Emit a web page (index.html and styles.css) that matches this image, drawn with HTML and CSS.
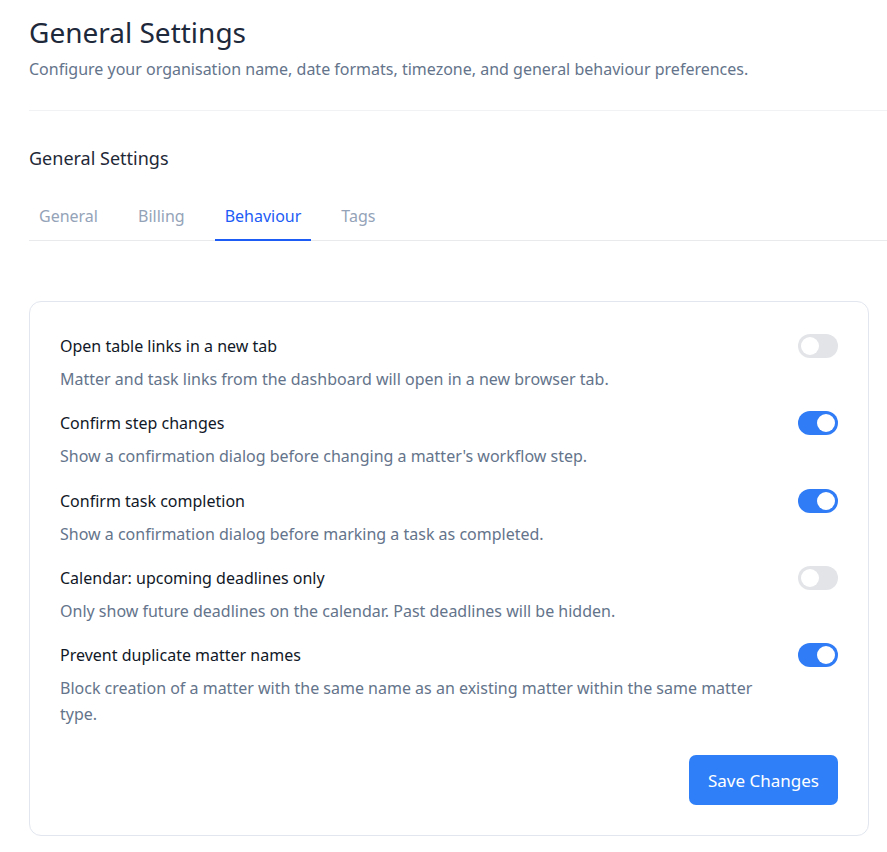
FILE: index.html
```html
<!DOCTYPE html>
<html>
<head>
<meta charset="UTF-8">
<title>General Settings</title>
<link rel="stylesheet" href="styles.css">
</head>
<body>
<div id="page">
    <header id="page-header">
        <h1>General Settings</h1>
        <p class="subtitle">Configure your organisation name, date formats, timezone, and general behaviour preferences.</p>
    </header>

    <section id="settings">
        <h2>General Settings</h2>

        <nav class="tabs">
            <a class="tab">General</a>
            <a class="tab">Billing</a>
            <a class="tab active">Behaviour</a>
            <a class="tab">Tags</a>
        </nav>

        <div class="card">
            <div class="option">
                <div class="option-text">
                    <div class="option-label">Open table links in a new tab</div>
                    <div class="option-desc">Matter and task links from the dashboard will open in a new browser tab.</div>
                </div>
                <span class="toggle"></span>
            </div>
            <div class="option">
                <div class="option-text">
                    <div class="option-label">Confirm step changes</div>
                    <div class="option-desc">Show a confirmation dialog before changing a matter's workflow step.</div>
                </div>
                <span class="toggle on"></span>
            </div>
            <div class="option">
                <div class="option-text">
                    <div class="option-label">Confirm task completion</div>
                    <div class="option-desc">Show a confirmation dialog before marking a task as completed.</div>
                </div>
                <span class="toggle on"></span>
            </div>
            <div class="option">
                <div class="option-text">
                    <div class="option-label">Calendar: upcoming deadlines only</div>
                    <div class="option-desc">Only show future deadlines on the calendar. Past deadlines will be hidden.</div>
                </div>
                <span class="toggle"></span>
            </div>
            <div class="option">
                <div class="option-text">
                    <div class="option-label">Prevent duplicate matter names</div>
                    <div class="option-desc">Block creation of a matter with the same name as an existing matter within the same matter type.</div>
                </div>
                <span class="toggle on"></span>
            </div>

            <div class="actions">
                <button class="btn-save">Save Changes</button>
            </div>
        </div>
    </section>
</div>
</body>
</html>
```

FILE: styles.css
```css
body {
    margin: 0;
    font-family: "Noto Sans", sans-serif;
    background-color: #FFFFFF;
    color: #111827;
}

#page {
    padding: 0 0 17px 29px;
}

#page-header {
    padding-top: 14px;
    border-bottom: 1px solid #F1F2F4;
    height: 111px;
    box-sizing: border-box;
}

h1 {
    margin: 0;
    font-size: 28px;
    font-weight: 400;
    line-height: 36px;
    color: #1E293B;
}

.subtitle {
    margin: 7px 0 0 0;
    font-size: 16px;
    line-height: 24px;
    color: #64748B;
}

h2 {
    margin: 34px 0 0 0;
    font-size: 18px;
    font-weight: 400;
    line-height: 26px;
    color: #1F2937;
}

.tabs {
    display: flex;
    gap: 20px;
    margin-top: 33px;
    border-bottom: 1px solid #E9EAEC;
}

.tab {
    padding: 0 10px 11px 10px;
    font-size: 16px;
    line-height: 24px;
    color: #94A3B8;
    border-bottom: 2px solid transparent;
    margin-bottom: -1px;
}

.tab.active {
    color: #1D5CF5;
    border-bottom-color: #1D5CF5;
}

.card {
    margin: 60px 18px 0 0;
    padding: 32px 30px 30px 30px;
    border: 1px solid #E2E6EE;
    border-radius: 12px;
    display: flex;
    flex-direction: column;
    gap: 19.3px;
}

.option {
    display: flex;
    align-items: flex-start;
    gap: 24px;
}

.option-text {
    flex: 1;
}

.option-label {
    font-size: 16px;
    line-height: 24px;
    color: #111827;
}

.option-desc {
    margin-top: 8px;
    font-size: 16px;
    line-height: 26px;
    color: #64748B;
}

.toggle {
    position: relative;
    width: 40px;
    height: 24px;
    border-radius: 12px;
    background-color: #E2E4E8;
    flex-shrink: 0;
}

.toggle::after {
    content: "";
    position: absolute;
    top: 3px;
    left: 3px;
    width: 18px;
    height: 18px;
    border-radius: 50%;
    background-color: #FFFFFF;
}

.toggle.on {
    background-color: #2F7CF6;
}

.toggle.on::after {
    left: 19px;
}

.actions {
    display: flex;
    justify-content: flex-end;
    margin-top: 9px;
}

.btn-save {
    width: 149px;
    height: 50px;
    border: none;
    border-radius: 7px;
    background-color: #2F80F8;
    color: #FFFFFF;
    font-family: "Noto Sans", sans-serif;
    font-size: 17px;
}
```
